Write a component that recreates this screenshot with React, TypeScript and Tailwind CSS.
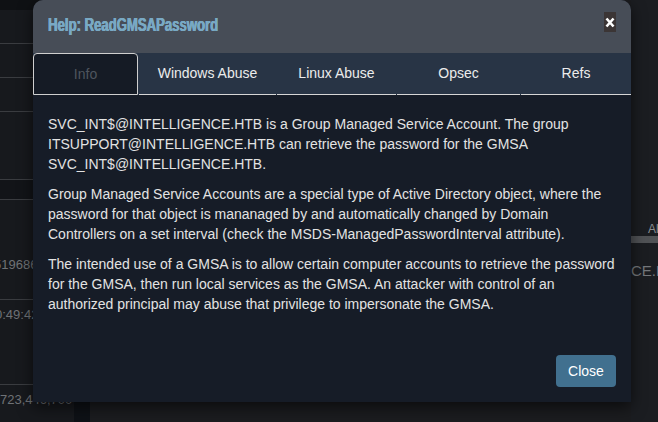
import React from "react";

const font = { fontFamily: '"Liberation Sans", Arial, sans-serif' };

function Tab({ label, w, active, first }: { label: string; w: string; active?: boolean; first?: boolean }) {
  if (active) {
    return (
      <div className={`${w} h-full flex items-center justify-center bg-[#151b25] border border-[#cfcfcf] rounded-t-[4px] text-[#4e555e] text-[14px]`}>
        {label}
      </div>
    );
  }
  return (
    <div className={`${w} ${first ? "" : "ml-[1px]"} h-full flex items-center justify-center border-b border-[#d6d6d6] text-[#ececec] text-[14px]`}>
      {label}
    </div>
  );
}

export default function App() {
  return (
    <div className="relative w-[658px] h-[422px] overflow-hidden bg-[#1b1c1f]" style={font}>
      {/* background page */}
      <div className="flex h-full">
        <div className="w-[74px] h-full flex flex-col bg-[#17191d] text-[13px] leading-[20px] text-[#6f7276]">
          <div className="h-[10px] bg-[#0f1114]" />
          <div className="h-[34px] border-b border-[#3a3c40]" />
          <div className="h-[34px] border-b border-[#3a3c40]" />
          <div className="h-[34px] border-b border-[#3a3c40]" />
          <div className="h-[68px] border-b border-[#3a3c40]" />
          <div className="h-[20px] bg-[#121418] border-b border-[#3a3c40]" />
          <div className="h-[100px] border-b border-[#3a3c40] pt-[55px] whitespace-nowrap">
            <span className="-ml-[6px]">519686</span>
          </div>
          <div className="h-[85px] border-b border-[#3a3c40] pt-[5px] whitespace-nowrap">
            <span className="-ml-[5px]">0:49:42</span>
          </div>
          <div className="flex-1 pt-[5px] whitespace-nowrap">
            <span>723,446,700</span>
          </div>
        </div>
        <div className="w-[16px] h-full bg-[#0e1116]" />
        <div className="flex-1 h-full bg-[#1b1c1f]" />
        <div className="w-[27px] h-full bg-[#1b1d21] flex flex-col pt-[223px]">
          <div className="text-[12px] text-[#8a8d91] pl-[17px] leading-[13px] whitespace-nowrap">All</div>
          <div className="h-[7px] bg-[#505255]" />
          <div className="text-[15px] text-[#74777b] mt-[17px] whitespace-nowrap">CE.HTB</div>
        </div>
      </div>

      {/* modal */}
      <div className="absolute left-[33px] top-0 w-[598px] h-[402px] flex flex-col rounded-t-[10px] overflow-hidden shadow-[0_5px_15px_rgba(0,0,0,0.6)] bg-[#161c27]">
        <div className="h-[53px] bg-[#474d57] flex items-start justify-between pl-[15px] pr-[15px]">
          <div className="mt-[14px] text-[18px] font-bold text-[#79a9c4] whitespace-nowrap origin-left [transform:scaleX(0.73)] leading-[22px] [text-shadow:0.6px_0_0_#79a9c4,-0.3px_0_0_#79a9c4]">
            Help: ReadGMSAPassword
          </div>
          <div className="mt-[12px] w-[12px] h-[20px] bg-[#3b3535] flex items-center justify-center">
            <svg width="10" height="11" viewBox="0 0 10 11">
              <path d="M1.5 1.5 L8.5 9.5 M8.5 1.5 L1.5 9.5" stroke="#ffffff" strokeWidth="2.6" strokeLinecap="butt" />
            </svg>
          </div>
        </div>
        <div className="h-[42px] bg-[#283445] flex">
          <Tab label="Info" w="w-[105px]" active />
          <Tab label="Windows Abuse" w="w-[137px]" />
          <Tab label="Linux Abuse" w="w-[119px]" />
          <Tab label="Opsec" w="w-[123px]" />
          <Tab label="Refs" w="w-[110px]" />
        </div>
        <div className="flex-1 px-[15px] pt-[19px] text-[14px] leading-[20px] text-[#e3e3e3]">
          <p>
            SVC_INT$@INTELLIGENCE.HTB is a Group Managed Service Account. The group ITSUPPORT@INTELLIGENCE.HTB can retrieve the password for the GMSA SVC_INT$@INTELLIGENCE.HTB.
          </p>
          <p className="mt-[10px]">
            Group Managed Service Accounts are a special type of Active Directory object, where the password for that object is mananaged by and automatically changed by Domain Controllers on a set interval (check the MSDS-ManagedPasswordInterval attribute).
          </p>
          <p className="mt-[10px]">
            The intended use of a GMSA is to allow certain computer accounts to retrieve the password for the GMSA, then run local services as the GMSA. An attacker with control of an authorized principal may abuse that privilege to impersonate the GMSA.
          </p>
        </div>
        <div className="flex justify-end px-[15px] pb-[15px]">
          <button className="w-[60px] h-[32px] rounded-[4px] bg-[#41708f] text-white text-[14px] flex items-center justify-center">
            Close
          </button>
        </div>
      </div>
    </div>
  );
}
